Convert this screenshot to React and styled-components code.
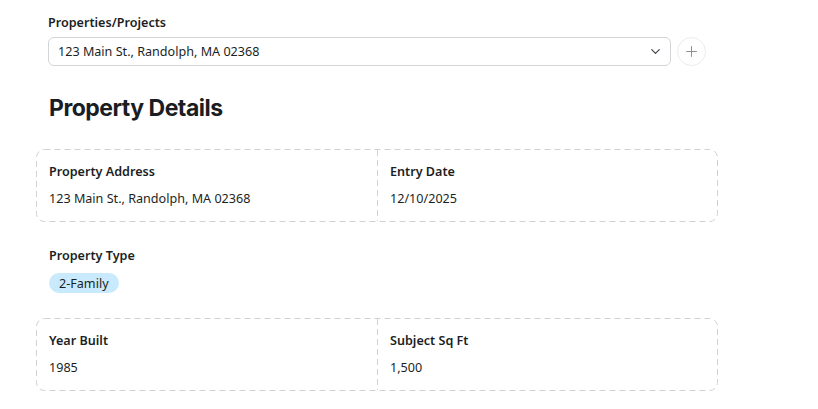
import React from "react";
import styled, { createGlobalStyle } from "styled-components";
import { ChevronDown, Plus } from "lucide-react";

const GlobalStyle = createGlobalStyle`
  body {
    margin: 0;
    background: #ffffff;
    font-family: "Noto Sans", "Open Sans", sans-serif;
    color: #1c1f24;
  }
`;

const details = [
  [
    { label: "Property Address", value: "123 Main St., Randolph, MA 02368" },
    { label: "Entry Date", value: "12/10/2025" },
  ],
  [
    { label: "Year Built", value: "1985" },
    { label: "Subject Sq Ft", value: "1,500" },
  ],
];

// dashed rounded outline, drawn so the dash length matches the design
const DashedOutline = () => (
  <Outline aria-hidden="true">
    <OutlineRect x="0.5" y="0.5" rx="8" ry="8" />
  </Outline>
);

const DetailCard = ({ items }) => (
  <Card>
    <DashedOutline />
    {items.map((d) => (
      <Cell key={d.label}>
        <Label>{d.label}</Label>
        <Value>{d.value}</Value>
      </Cell>
    ))}
  </Card>
);

const App = () => {
  return (
    <Page>
      <GlobalStyle />
      <Field>
        <Label>Properties/Projects</Label>
        <SelectRow>
          <Select>
            <span>123 Main St., Randolph, MA 02368</span>
            <ChevronDown size={15} strokeWidth={1.8} color="#3a3d42" />
          </Select>
          <AddButton>
            <Plus size={17} strokeWidth={1.4} color="#8a8d92" />
          </AddButton>
        </SelectRow>
      </Field>

      <Heading>Property Details</Heading>

      <DetailCard items={details[0]} />

      <TypeField>
        <Label>Property Type</Label>
        <Badge>2-Family</Badge>
      </TypeField>

      <DetailCard items={details[1]} />
    </Page>
  );
};

export default App;

const Page = styled.div`
  width: 682px;
  padding: 14px 0 0 36px;
`;

const Field = styled.div`
  padding: 0 12px;
`;

const Label = styled.div`
  font-size: 12.6px;
  font-weight: 600;
  line-height: 18px;
  color: #1c1f24;
`;

const SelectRow = styled.div`
  display: flex;
  align-items: center;
  gap: 6px;
  margin-top: 5px;
`;

const Select = styled.div`
  flex: 1;
  height: 29px;
  box-sizing: border-box;
  display: flex;
  align-items: center;
  justify-content: space-between;
  padding: 0 7px 0 9px;
  border: 1px solid #d3d5d8;
  border-radius: 6px;
  font-size: 12.6px;
  color: #1c1f24;
`;

const AddButton = styled.div`
  width: 29px;
  height: 29px;
  box-sizing: border-box;
  border: 1px solid #ebecee;
  border-radius: 50%;
  display: flex;
  align-items: center;
  justify-content: center;
`;

const Heading = styled.h2`
  margin: 27px 0 0 0;
  padding: 0 13px;
  font-family: Inter, "Noto Sans", sans-serif;
  font-size: 23px;
  font-weight: 700;
  line-height: 30px;
  letter-spacing: -0.5px;
  color: #1a1d21;
`;

const Card = styled.div`
  position: relative;
  display: grid;
  grid-template-columns: 1fr 1fr;
  margin-top: 26px;
  padding: 1px;

  & + div {
    margin-top: 25px;
  }
`;

const Outline = styled.svg`
  position: absolute;
  inset: 0;
  width: 100%;
  height: 100%;
  overflow: visible;
  pointer-events: none;
`;

const OutlineRect = styled.rect`
  width: calc(100% - 1px);
  height: calc(100% - 1px);
  fill: none;
  stroke: #cfd1d4;
  stroke-width: 1;
  stroke-dasharray: 6 4;
`;

const Cell = styled.div`
  padding: 13px 12px;
  display: flex;
  flex-direction: column;
  gap: 9px;

  & + & {
    padding-left: 13px;
    background-image: linear-gradient(to bottom, #cfd1d4 6px, transparent 6px);
    background-size: 1px 10px;
    background-repeat: repeat-y;
    background-position: 0 0;
  }
`;

const Value = styled.div`
  font-size: 12.6px;
  line-height: 18px;
  color: #1c1f24;
`;

const TypeField = styled.div`
  padding: 0 13px;
  display: flex;
  flex-direction: column;
  align-items: flex-start;
  gap: 8px;

  & + div {
    margin-top: 25px;
  }
`;

const Badge = styled.span`
  height: 20px;
  display: inline-flex;
  align-items: center;
  padding: 0 10px;
  border-radius: 10px;
  background: #c9eafc;
  font-size: 12.6px;
  color: #1c1f24;
`;
